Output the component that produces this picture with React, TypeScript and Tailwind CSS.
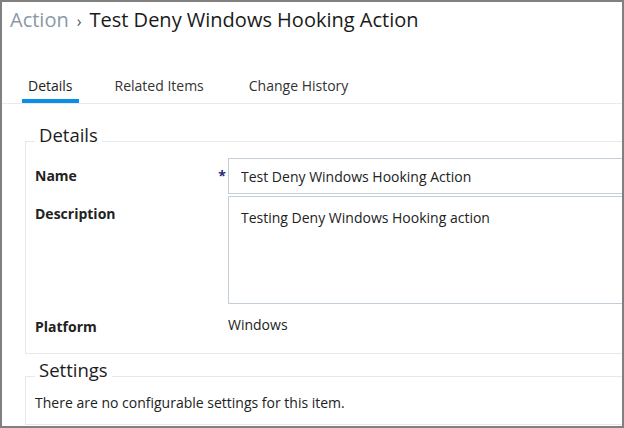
import React from 'react'

const tabs = [
  { label: 'Details', active: true, gap: '' },
  { label: 'Related Items', active: false, gap: 'ml-[30px]' },
  { label: 'Change History', active: false, gap: 'ml-[33px]' },
]

function Legend({ children }: { children: React.ReactNode }) {
  return (
    <legend className="ml-0 px-[4px] pb-[13px] text-[18.5px] leading-[20px] text-[#1c1c1c]">
      {children}
    </legend>
  )
}

export default function App() {
  return (
    <div className="h-[428px] w-[624px] overflow-hidden border-2 border-[#808080] bg-white font-['Open_Sans',sans-serif] text-[#222]">
      <div className="w-[760px]">
        <h1 className="pl-[8px] pt-[4px] text-[20px] leading-[28px] font-normal">
          <span className="text-[#8a99a8]">Action</span>
          <span className="mx-[8px] text-[16px] text-[#555]">›</span>
          <span className="text-[#1a1a1a]">Test Deny Windows Hooking Action</span>
        </h1>

        <nav className="mt-[41px] flex border-b border-[#e5ebf1] pl-[20px]">
          {tabs.map((t) => (
            <div
              key={t.label}
              className={`${t.gap} px-[6px] pb-[3px] text-[14px] leading-[20px] ${
                t.active ? 'border-b-4 border-[#0b8de8] text-[#222]' : 'border-b-4 border-transparent text-[#333]'
              }`}
            >
              {t.label}
            </div>
          ))}
        </nav>

        <fieldset className="ml-[23px] mt-[21px] border border-[#e4e9ee] pl-[9px] pb-[16px]">
          <Legend>Details</Legend>
          <div className="flex">
            <div className="flex w-[193px] pt-[8px] text-[14px] leading-[20px]">
              <span className="flex-1 font-bold">Name</span>
              <span className="pr-[2px] font-bold text-[#27297a]">*</span>
            </div>
            <input
              readOnly
              value="Test Deny Windows Hooking Action"
              className="h-[36px] flex-1 border border-[#c3ced9] px-[12px] text-[14px] leading-[20px] text-[#222] outline-none"
            />
          </div>
          <div className="mt-[2px] flex">
            <div className="w-[193px] pt-[8px] text-[14px] font-bold leading-[20px]">Description</div>
            <textarea
              readOnly
              value="Testing Deny Windows Hooking action"
              className="h-[108px] flex-1 resize-none border border-[#c3ced9] px-[12px] pt-[11px] text-[14px] leading-[20px] text-[#222] outline-none"
            />
          </div>
          <div className="mt-[5px] flex">
            <div className="w-[193px] pt-[8px] text-[14px] font-bold leading-[20px]">Platform</div>
            <div className="pt-[6px] text-[14px] leading-[20px]">Windows</div>
          </div>
        </fieldset>

        <fieldset className="ml-[23px] mt-[6px] border border-[#e4e9ee] pl-[9px] pb-[11px]">
          <Legend>Settings</Legend>
          <p className="text-[14px] leading-[20px]">There are no configurable settings for this item.</p>
        </fieldset>
      </div>
    </div>
  )
}
